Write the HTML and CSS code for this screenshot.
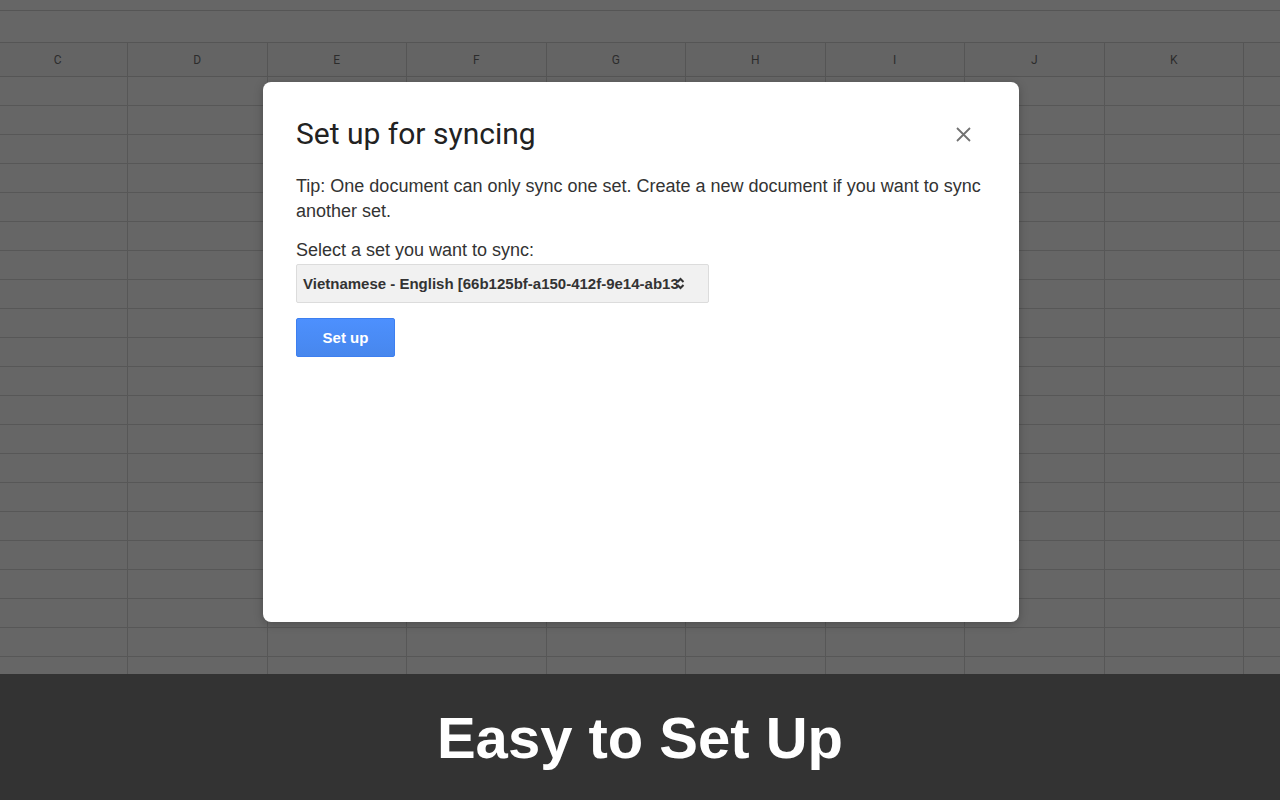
FILE: index.html
```html
<!DOCTYPE html>
<html>
<head>
<meta charset="utf-8">
<link rel="stylesheet" href="styles.css">
</head>
<body>
<div class="sheet">
  <div class="strip"></div>
  <div class="toolbar"></div>
  <div class="grid">
    <div class="hd">C</div><div class="hd">D</div><div class="hd">E</div><div class="hd">F</div><div class="hd">G</div><div class="hd">H</div><div class="hd">I</div><div class="hd">J</div><div class="hd">K</div><div class="hd"></div>
  </div>
  <div class="grid rows" id="rows"></div>

  <div class="dialog">
    <div class="dlg-head">
      <h1 class="dlg-title">Set up for syncing</h1>
      <button class="close" aria-label="Close">
        <svg width="15" height="15" viewBox="0 0 15 15"><path d="M1 1 L14 14 M14 1 L1 14" stroke="#727272" stroke-width="1.8" fill="none"/></svg>
      </button>
    </div>
    <p class="tip">Tip: One document can only sync one set. Create a new document if you want to sync another set.</p>
    <label class="lbl">Select a set you want to sync:</label>
    <div class="select">
      <span class="sel-text">Vietnamese - English [66b125bf-a150-412f-9e14-ab13</span>
      <svg class="arrows" width="9" height="13" viewBox="0 0 9 13"><path d="M1.5 5 L4.5 2 L7.5 5 M1.5 8 L4.5 11 L7.5 8" stroke="#333" stroke-width="2" fill="none"/></svg>
    </div>
    <button class="btn">Set up</button>
  </div>
</div>
<div class="banner">Easy to Set Up</div>
<script>
var r=document.getElementById('rows');var h='';for(var i=0;i<21*10;i++){h+='<div class="cell"></div>';}r.innerHTML=h;
</script>
</body>
</html>
```
FILE: styles.css
```css
html, body { margin: 0; padding: 0; }
body { width: 1280px; height: 800px; overflow: hidden; font-family: "Liberation Sans", Arial, sans-serif; background: #666; }
.sheet { position: relative; height: 674px; overflow: hidden; background: #666666; }
.strip { height: 10px; border-bottom: 1px solid #555; }
.toolbar { height: 31px; border-bottom: 1px solid #555; }
.grid { display: grid; grid-template-columns: repeat(10, 139.5px); margin-left: -11.5px; }
.hd { height: 33px; border-right: 1px solid #555; border-bottom: 1px solid #555; display: flex; align-items: center; justify-content: center; font-family: Roboto, "Liberation Sans", sans-serif; font-size: 12px; color: #2c2c2c; background: #646464; }
.cell { height: 28px; border-right: 1px solid #575757; border-bottom: 1px solid #575757; }
.dialog { position: absolute; left: 263px; top: 82px; width: 756px; height: 540px; box-sizing: border-box; background: #fff; border-radius: 8px; box-shadow: 0 2px 10px rgba(0,0,0,0.25); padding: 31px 33px 0 33px; color: #333; }
.dlg-head { display: flex; align-items: center; justify-content: space-between; height: 40px; }
.dlg-title { margin: 0; font-family: Roboto, "Liberation Sans", sans-serif; font-weight: 400; font-size: 30px; color: #222; }
.close { border: 0; background: none; padding: 0; width: 15px; height: 15px; margin-right: 15px; margin-top: 2px; display: flex; }
.tip { margin: 21px 0 0 0; font-size: 18px; line-height: 25px; color: #333; }
.lbl { display: block; margin-top: 15px; font-size: 18px; line-height: 22px; color: #333; }
.select { margin-top: 3px; width: 413px; height: 39px; box-sizing: border-box; border: 1px solid #dcdcdc; border-radius: 2px; background: #f1f1f1; display: flex; align-items: center; padding-left: 6px; }
.sel-text { font-weight: 700; font-size: 15px; color: #333; white-space: nowrap; }
.arrows { margin-left: -3px; flex: none; }
.btn { margin-top: 15px; width: 99px; height: 39px; border: 1px solid #3d7ff0; border-radius: 2px; background: linear-gradient(#4d90fe, #4787ed); color: #fff; font-family: "Liberation Sans", Arial, sans-serif; font-weight: 700; font-size: 15px; display: flex; align-items: center; justify-content: center; }
.banner { height: 126px; background: #333333; color: #fff; display: flex; align-items: center; justify-content: center; font-family: "Liberation Sans", Arial, sans-serif; font-weight: 700; font-size: 58px; }
```
